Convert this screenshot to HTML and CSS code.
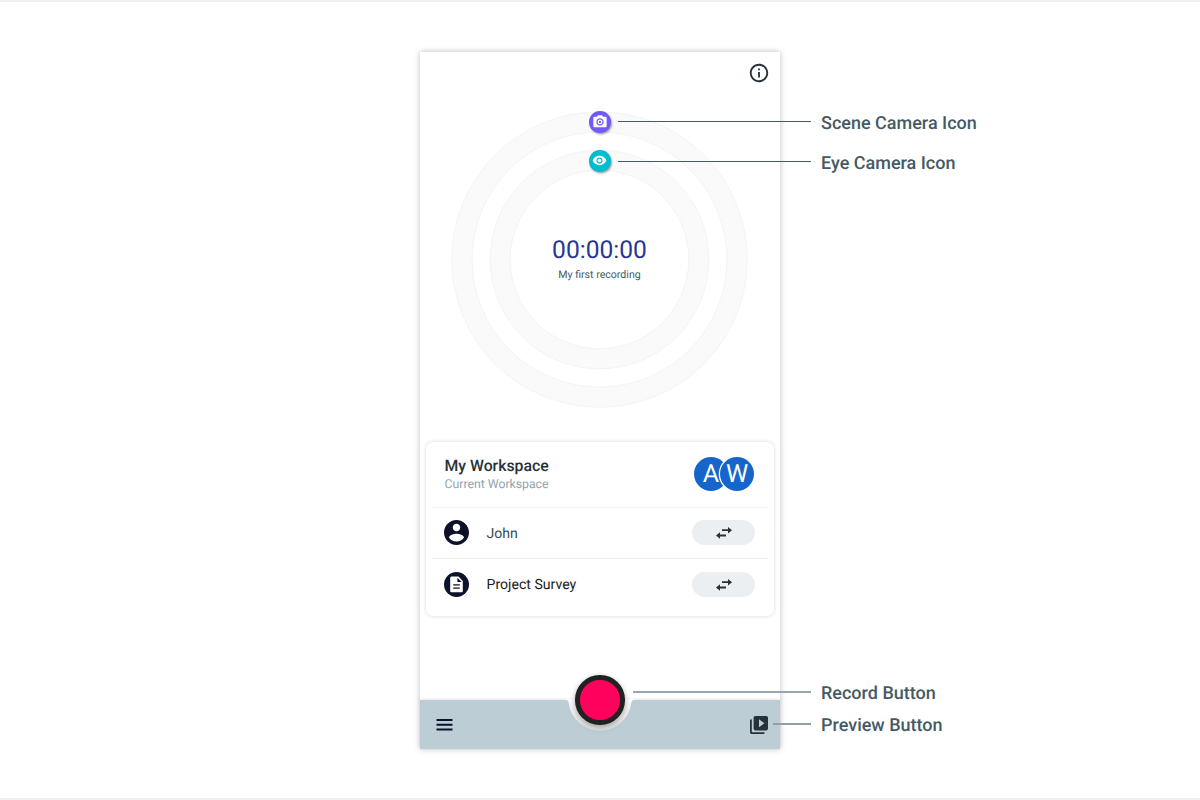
FILE: index.html
```html
<!DOCTYPE html>
<html lang="en">
<head>
<meta charset="utf-8">
<title>Recording app</title>
<link rel="stylesheet" href="styles.css">
</head>
<body>
<main class="stage">
  <section class="phone">
    <header class="topbar">
      <svg class="icon-info" viewBox="0 0 24 24"><path d="M11 7h2v2h-2zm0 4h2v6h-2zm1-9C6.480 2 2 6.480 2 12s4.480 10 10 10 10-4.480 10-10S17.520 2 12 2zm0 18c-4.410 0-8-3.590-8-8s3.590-8 8-8 8 3.590 8 8-3.590 8-8 8z"/></svg>
    </header>
    <div class="dial">
      <svg class="rings" viewBox="0 0 298 298">
        <circle class="band" cx="148.500" cy="149.500" r="137.700"/>
        <circle class="band" cx="148.500" cy="149.500" r="99.300"/>
        <circle class="edge" cx="148.500" cy="149.500" r="147.700"/>
        <circle class="edge" cx="148.500" cy="149.500" r="127.500"/>
        <circle class="edge" cx="148.500" cy="149.500" r="109.300"/>
        <circle class="edge" cx="148.500" cy="149.500" r="89.300"/>
      </svg>
      <span class="badge scene"><svg viewBox="0 0 24 24"><path d="M9 2L7.170 4H4c-1.100 0-2 .9-2 2v12c0 1.100.9 2 2 2h16c1.100 0 2-.9 2-2V6c0-1.100-.9-2-2-2h-3.170L15 2H9zm3 15.500c-3 0-5.500-2.500-5.500-5.500s2.500-5.500 5.500-5.500 5.500 2.500 5.500 5.500-2.500 5.500-5.500 5.500z"/><circle class="lens" cx="12" cy="12" r="2.700"/></svg></span>
      <span class="badge eye"><svg viewBox="0 0 24 24"><path d="M12 4.500C7 4.500 2.730 7.610 1 12c1.730 4.390 6 7.500 11 7.500s9.270-3.110 11-7.500c-1.730-4.390-6-7.500-11-7.500zM12 17c-2.760 0-5-2.240-5-5s2.240-5 5-5 5 2.240 5 5-2.240 5-5 5zm0-8c-1.660 0-3 1.340-3 3s1.340 3 3 3 3-1.340 3-3-1.340-3-3-3z"/></svg></span>
      <div class="readout">
        <div class="time">00:00:00</div>
        <div class="recording">My first recording</div>
      </div>
    </div>
    <section class="card">
      <div class="row workspace">
        <div class="names">
          <div class="title">My Workspace</div>
          <div class="subtitle">Current Workspace</div>
        </div>
        <div class="avatars"><span class="avatar first">A</span><span class="avatar second">W</span></div>
      </div>
      <div class="row wearer">
        <svg class="row-icon" viewBox="2 2 20 20"><path d="M12 2C6.480 2 2 6.480 2 12s4.480 10 10 10 10-4.480 10-10S17.520 2 12 2zm0 3c1.660 0 3 1.340 3 3s-1.340 3-3 3-3-1.340-3-3 1.340-3 3-3zm0 14.200c-2.500 0-4.710-1.280-6-3.220.03-1.990 4-3.080 6-3.080 1.990 0 5.970 1.090 6 3.080-1.290 1.940-3.500 3.220-6 3.220z"/></svg>
        <span class="label">John</span>
        <span class="swap"><svg viewBox="0 0 16 12"><path d="M12 0l4 3.200-4 3.200V4.100H6V2.300h6zM4 5.300v2.300h6v1.800H4v2.300L0 8.500z"/></svg></span>
      </div>
      <div class="row template">
        <svg class="row-icon" viewBox="0 0 25 25"><circle cx="12.500" cy="12.500" r="12.500"/><path class="paper" d="M7.800 4.500h6.700l4.300 4.400v10c0 .9-.6 1.400-1.400 1.400H7.600c-.9 0-1.400-.6-1.400-1.400V6c0-.9.7-1.500 1.600-1.500z"/><path d="M13.400 5.700v4.300h4.300zM9.200 12.200h6.600v1.400H9.200zM9.200 15.400h6.600v1.400H9.200z"/></svg>
        <span class="label dark">Project Survey</span>
        <span class="swap"><svg viewBox="0 0 16 12"><path d="M12 0l4 3.200-4 3.200V4.100H6V2.300h6zM4 5.300v2.300h6v1.800H4v2.300L0 8.500z"/></svg></span>
      </div>
    </section>
    <footer class="bottombar">
      <svg class="menu" viewBox="0 0 17 12"><path d="M.5 0h16v2H.5zM.5 4.700h16v2H.5zM.5 9.400h16v2H.5z"/></svg>
      <svg class="notch" viewBox="0 0 70 35"><defs><linearGradient id="cup" x1="0" y1="0" x2="0" y2="1"><stop offset="0" stop-color="#fff"/><stop offset=".45" stop-color="#f0f0f0"/><stop offset="1" stop-color="#dfe0e0"/></linearGradient></defs><path fill="url(#cup)" d="M0 0Q3.200.4 3.800 4.500A31.500 31.500 0 0 0 66.200 4.500Q66.800.4 70 0z"/></svg>
      <span class="record"></span>
      <svg class="library" viewBox="2 2 20 20"><path d="M4 6H2v14c0 1.100.9 2 2 2h14v-2H4V6zm16-4H8c-1.100 0-2 .9-2 2v12c0 1.100.9 2 2 2h12c1.100 0 2-.9 2-2V4c0-1.100-.9-2-2-2zm-8 12.500v-9l6 4.500-6 4.500z"/></svg>
    </footer>
  </section>
  <div class="callout c-scene"><i></i><span>Scene Camera Icon</span></div>
  <div class="callout c-eye"><i></i><span>Eye Camera Icon</span></div>
  <div class="callout c-record"><i></i><span>Record Button</span></div>
  <div class="callout c-preview"><i></i><span>Preview Button</span></div>
</main>
</body>
</html>
```
FILE: styles.css
```css
* { box-sizing: border-box; }
body { margin: 0; background: #fff; font-family: Roboto, sans-serif; color: #263238; text-rendering: geometricPrecision; }
svg { display: block; fill: currentColor; }
.stage {
  position: relative;
  height: 800px;
  padding-top: 50px;
  border-top: 2px solid #eee;
  border-bottom: 2px solid #eee;
  display: flex;
  justify-content: center;
  align-items: flex-start;
}
.phone {
  width: 360px;
  height: 697px;
  display: flex;
  flex-direction: column;
  background: #fff;
  box-shadow: 0 0 6px rgba(0, 0, 0, .26);
}
.topbar { height: 58px; padding: 10px 10px 0 0; display: flex; justify-content: flex-end; }
.icon-info { width: 22px; height: 22px; }
.dial { position: relative; height: 298px; width: 298px; margin-left: 31px; display: flex; justify-content: center; }
.rings { position: absolute; inset: 0; width: 298px; height: 298px; fill: none; }
.band { stroke: #fafafa; stroke-width: 20; }
.edge { stroke: #f4f4f4; stroke-width: 1; }
.badge {
  position: absolute;
  left: 138px;
  width: 21.500px;
  height: 21.500px;
  border-radius: 50%;
  color: #fff;
  display: flex;
  align-items: center;
  justify-content: center;
  box-shadow: 1px 1.500px 2px rgba(0, 0, 0, .35);
}
.badge svg { width: 15px; height: 15px; }
.scene svg { width: 16px; height: 16px; }
.lens { fill: none; stroke: #fff; stroke-width: 2; }
.scene { top: 1px; background: #7059f6; }
.eye { top: 40px; background: #00bcd0; }
.readout { position: relative; left: -.5px; padding-top: 125px; text-align: center; }
.time { font-size: 24.600px; line-height: 32px; color: #283593; }
.recording { margin-top: 1px; font-size: 10.600px; line-height: 14px; color: #455a64; }
.card {
  width: 348px;
  height: 174px;
  margin: 34px 6px 0;
  padding: 0 6px;
  border-radius: 7px;
  background: #fff;
  box-shadow: 0 0 4px rgba(0, 0, 0, .15);
}
.row { display: flex; align-items: center; padding: 0 13px 0 12px; }
.workspace { height: 65.500px; padding-right: 14px; border-bottom: 1px solid #f3f4f4; justify-content: space-between; }
.title { font-size: 15.800px; line-height: 20px; font-weight: 500; }
.names { margin-left: .5px; }
.subtitle { margin-top: 1px; font-size: 12.250px; line-height: 15px; color: #90a4ae; }
.avatars { display: flex; }
.avatar { width: 34px; height: 34px; border-radius: 50%; background: #1565cb; color: #fff; font-size: 25px; line-height: 36px; text-align: center; }
.second { margin-left: -8px; box-shadow: 0 0 0 1.300px #fff; }
.wearer { height: 51.500px; border-bottom: 1px solid #e9eef1; }
.template { height: 51px; }
.row-icon { width: 25px; height: 25px; margin-right: 17.500px; color: #0d122b; }
.paper { fill: #fff; }
.label { flex: 1; padding-top: 2px; font-size: 14.100px; color: #37474f; }
.dark { padding-top: 1px; color: #212121; }
.swap { width: 63px; height: 25px; border-radius: 13px; background: #eceff1; display: flex; align-items: center; justify-content: center; }
.swap svg { width: 16px; height: 12px; }
.bottombar {
  position: relative;
  height: 49px;
  margin-top: auto;
  padding: 0 12px 0 16px;
  background: #bdcdd6;
  display: flex;
  align-items: center;
  justify-content: space-between;
  box-shadow: 0 -1px 2px rgba(0, 0, 0, .1);
}
.menu { width: 17px; height: 12px; color: #0d122b; }
.library { width: 18px; height: 18px; }
.notch { position: absolute; left: 145px; top: -1px; width: 70px; height: 35px; }
.record {
  position: absolute;
  left: 155px;
  top: -25px;
  width: 49.500px;
  height: 49.500px;
  border-radius: 50%;
  border: 5.500px solid #212121;
  background: #ff005c;
  box-shadow: 0 2px 6px rgba(0, 0, 0, .32);
}
.callout { position: absolute; right: 0; height: 22px; display: flex; align-items: center; color: #455a64; font-size: 18px; line-height: 22px; font-weight: 500; }
.callout i { position: relative; top: -1px; height: 1px; background: #455a64; margin-right: 10px; }
.callout span { width: 379px; padding-top: 2px; }
.c-scene { top: 110px; }
.c-eye { top: 150px; }
.c-scene i, .c-eye i { top: -2px; width: 193px; }
.c-record { top: 680px; }
.c-record i { width: 178px; height: 2px; background: #98a7af; }
.c-preview { top: 712px; }
.c-preview i { width: 38px; height: 2px; background: #8fa0a9; }
```
